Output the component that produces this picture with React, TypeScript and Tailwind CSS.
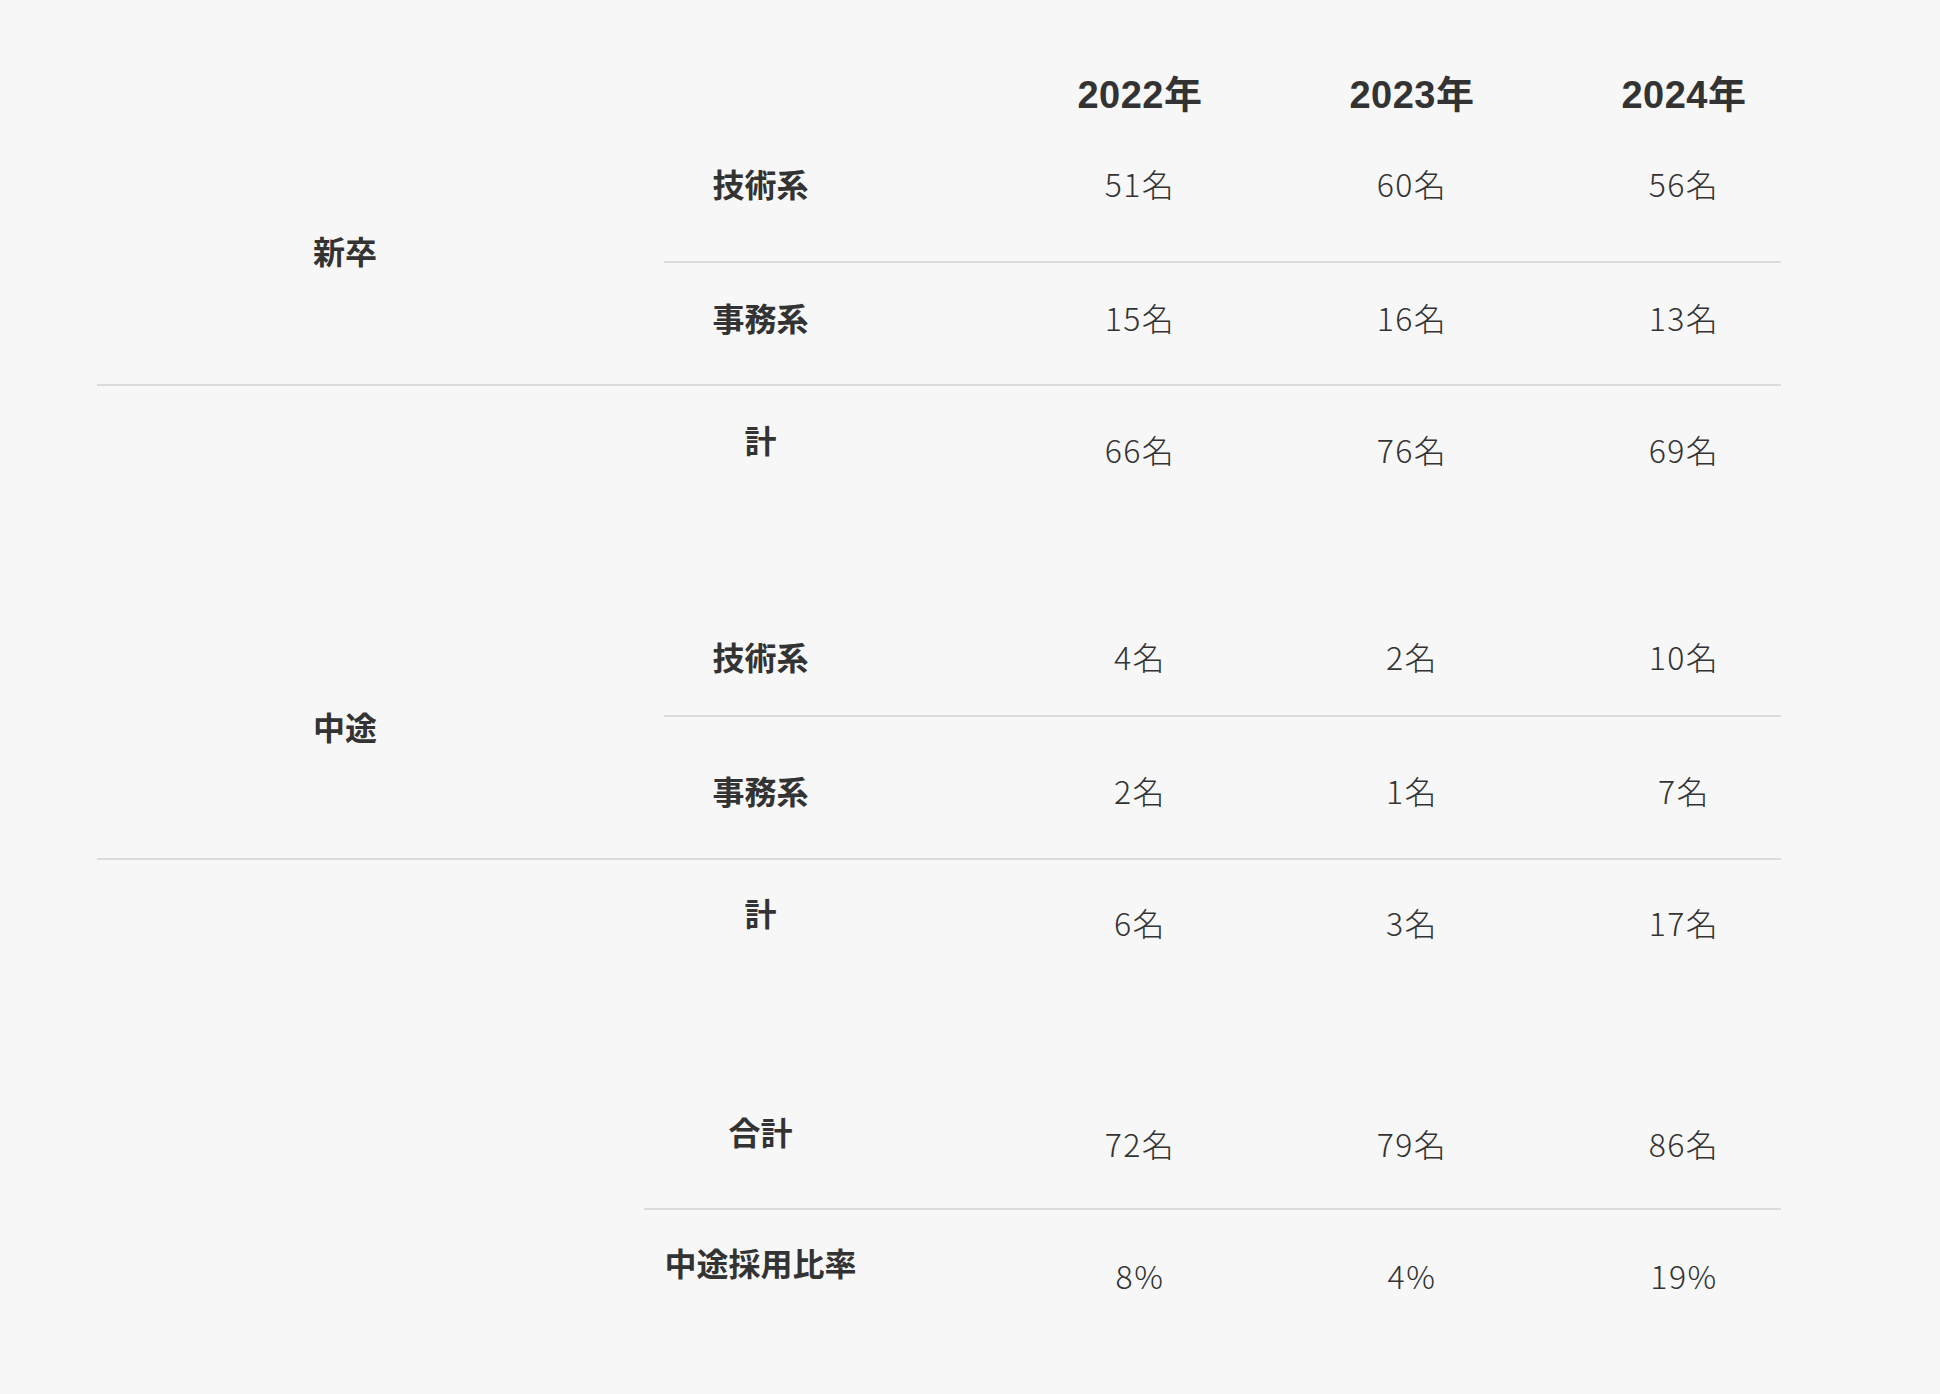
const years = ['2022年', '2023年', '2024年'];

function Values({ items, className }: { items: string[]; className: string }) {
  return (
    <div className={`flex ${className}`}>
      {items.map((v, i) => (
        <div key={i} className="w-[272px] text-center text-[32px] leading-[43px] font-light tracking-[1.5px] text-[#333]">
          {v}
        </div>
      ))}
    </div>
  );
}

function SubRow({
  label,
  values,
  className,
  labelPad,
  valuePad,
}: {
  label: string;
  values: string[];
  className: string;
  labelPad: string;
  valuePad: string;
}) {
  return (
    <div className={`flex items-start ${className}`}>
      <div className={`w-[487px] text-center text-[32px] leading-[43px] font-bold text-[#333] ${labelPad}`}>{label}</div>
      <Values items={values} className={valuePad} />
    </div>
  );
}

const SubLine = () => <div className="ml-[147px] w-[1117px] h-[2px] bg-[#dcdcdc]" />;
const FullLine = () => <div className="w-[1684px] h-[2px] bg-[#dcdcdc]" />;

export default function App() {
  return (
    <div className="min-h-[1394px] bg-[#f7f7f7] pl-[97px] pt-[70px] font-['Noto_Sans_CJK_JP',sans-serif] text-[#333]">
      {/* Header */}
      <div className="flex h-[64px] items-start pt-[1px]">
        <div className="w-[907px]" />
        {years.map((y) => (
          <div
            key={y}
            className="w-[272px] text-center text-[38px] leading-[48px] font-bold tracking-[0.5px] font-['Liberation_Sans','Noto_Sans_CJK_JP',sans-serif]"
          >
            {y}
          </div>
        ))}
      </div>

      {/* 新卒 */}
      <div className="flex">
        <div className="w-[420px] pl-[76px] pt-[95px] text-center text-[32px] leading-[43px] font-bold">新卒</div>
        <div>
          <SubRow label="技術系" values={['51名', '60名', '56名']} className="h-[127px]" labelPad="pt-[28px]" valuePad="pt-[28px]" />
          <SubLine />
          <SubRow label="事務系" values={['15名', '16名', '13名']} className="h-[121px]" labelPad="pt-[33px]" valuePad="pt-[33px]" />
        </div>
      </div>
      <FullLine />
      <div className="flex">
        <div className="w-[420px]" />
        <SubRow label="計" values={['66名', '76名', '69名']} className="h-[221px]" labelPad="pt-[32px]" valuePad="pt-[42px]" />
      </div>

      {/* 中途 */}
      <div className="flex">
        <div className="w-[420px] pl-[76px] pt-[98px] text-center text-[32px] leading-[43px] font-bold">中途</div>
        <div>
          <SubRow label="技術系" values={['4名', '2名', '10名']} className="h-[108px]" labelPad="pt-[28px]" valuePad="pt-[28px]" />
          <SubLine />
          <SubRow label="事務系" values={['2名', '1名', '7名']} className="h-[141px]" labelPad="pt-[52px]" valuePad="pt-[52px]" />
        </div>
      </div>
      <FullLine />
      <div className="flex">
        <div className="w-[420px]" />
        <SubRow label="計" values={['6名', '3名', '17名']} className="h-[200px]" labelPad="pt-[31px]" valuePad="pt-[41px]" />
      </div>

      {/* 合計 */}
      <div className="flex">
        <div className="w-[420px]" />
        <SubRow label="合計" values={['72名', '79名', '86名']} className="h-[148px]" labelPad="pt-[50px]" valuePad="pt-[62px]" />
      </div>
      <div className="ml-[547px] w-[1137px] h-[2px] bg-[#dcdcdc]" />
      <div className="flex">
        <div className="w-[420px]" />
        <SubRow label="中途採用比率" values={['8%', '4%', '19%']} className="h-[184px]" labelPad="pt-[31px]" valuePad="pt-[44px]" />
      </div>
    </div>
  );
}
